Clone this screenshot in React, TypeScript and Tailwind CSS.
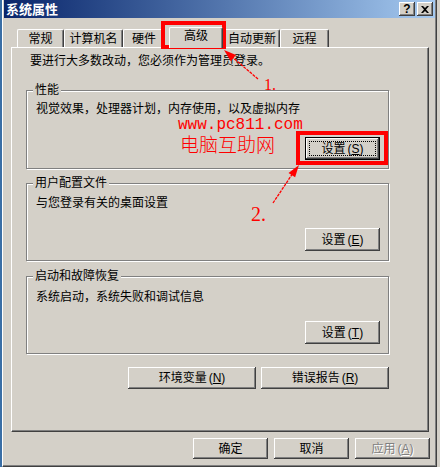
import type { ReactNode } from "react";

const bevel =
  "shadow-[inset_-1px_-1px_0_#404040,inset_1px_1px_0_#ffffff,inset_-2px_-2px_0_#808080]";
const etched = "border border-[#808080] shadow-[inset_1px_1px_0_#ffffff,1px_1px_0_#ffffff]";

function Button({
  children,
  className = "",
  primary = false,
  disabled = false,
}: {
  children: ReactNode;
  className?: string;
  primary?: boolean;
  disabled?: boolean;
}) {
  if (primary) {
    return (
      <div className={`flex border border-black bg-[#d4d0c8] p-[3px] ${bevel} ${className}`}>
        <div className="flex flex-1 items-center justify-center border border-dotted border-black">
          {children}
        </div>
      </div>
    );
  }
  return (
    <div
      className={`flex items-center justify-center bg-[#d4d0c8] ${bevel} ${
        disabled ? "text-[#808080] [text-shadow:1px_1px_0_#ffffff]" : ""
      } ${className}`}
    >
      {children}
    </div>
  );
}

function Key({ k }: { k: string }) {
  return (
    <span className="ml-[2px]">
      (<span className="underline underline-offset-1">{k}</span>)
    </span>
  );
}

function Group({
  title,
  text,
  children,
  className = "",
  textClass = "",
  btnClass = "",
}: {
  title: string;
  text: string;
  children: ReactNode;
  className?: string;
  textClass?: string;
  btnClass?: string;
}) {
  return (
    <fieldset className={`${etched} ${className}`}>
      <legend className="ml-[6px] bg-[#d4d0c8] px-[2px] leading-[14px]">{title}</legend>
      <div className={`pl-[9px] ${textClass}`}>{text}</div>
      <div className={`flex justify-end pr-[8px] ${btnClass}`}>{children}</div>
    </fieldset>
  );
}

export default function App() {
  const tabs = [
    { label: "常规", cls: "w-[47px]" },
    { label: "计算机名", cls: "w-[59px]" },
    { label: "硬件", cls: "w-[42px]" },
    { label: "高级", cls: "w-[54px] ml-[4px]", active: true },
    { label: "自动更新", cls: "w-[56px] ml-[1px]" },
    { label: "远程", cls: "w-[49px]" },
  ];

  return (
    <div className="relative flex h-[467px] w-[440px] overflow-hidden bg-[#d4d0c8] font-['Liberation_Sans','Noto_Sans_CJK_SC',sans-serif] text-[12px] leading-[14px] text-black">
      <div className="w-[2px] bg-[#3a6ea5]" />

      {/* window */}
      <div className="flex w-[435px] flex-col border-b border-l border-r border-b-[#404040] border-l-white border-r-[#404040] pl-[1px] pr-[1px] shadow-[inset_-1px_-1px_0_#808080]">
        {/* title bar */}
        <div className="flex h-[18px] items-center bg-linear-to-r from-[#0a246a] to-[#a6caf0] pl-[2px] pr-[2px]">
          <span className="text-[13px] font-bold leading-none text-white">系统属性</span>
          <div className="ml-auto flex gap-[2px]">
            <div className={`flex h-[14px] w-[16px] items-center justify-center bg-[#d4d0c8] text-[12px] font-bold leading-none ${bevel}`}>
              ?
            </div>
            <div className={`flex h-[14px] w-[16px] items-center justify-center bg-[#d4d0c8] ${bevel}`}>
              <svg width="8" height="7" viewBox="0 0 8 7">
                <path d="M0 0h2l2 2 2-2h2L5 3.5 8 7H6L4 5 2 7H0l3-3.5z" fill="#000" />
              </svg>
            </div>
          </div>
        </div>

        {/* tabs */}
        <div className="ml-[10px] mt-[9px] flex h-[20px] items-end pl-[3px]">
          {tabs.map((t) =>
            t.active ? (
              <div
                key={t.label}
                className={`relative z-10 -mb-px flex h-[21px] justify-center rounded-t-[2px] border-l border-r border-t border-l-white border-r-[#404040] border-t-white bg-[#d4d0c8] pt-[1px] shadow-[inset_-1px_0_0_#808080] ${t.cls}`}
              >
                {t.label}
              </div>
            ) : (
              <div
                key={t.label}
                className={`flex h-[18px] justify-center rounded-t-[2px] border-l border-r border-t border-l-white border-r-[#404040] border-t-white pt-[2px] shadow-[inset_-1px_0_0_#808080] ${t.cls}`}
              >
                {t.label}
              </div>
            )
          )}
        </div>

        {/* tab panel */}
        <div className="ml-[7px] flex h-[385px] w-[418px] flex-col border-b border-l border-r border-t border-b-[#404040] border-l-white border-r-[#404040] border-t-white pl-[14px] shadow-[inset_-1px_-1px_0_#808080]">
          <div className="ml-[4px] mt-[6px]">要进行大多数改动，您必须作为管理员登录。</div>

          <div className="flex w-[363px] flex-col">
            <Group
              title="性能"
              text="视觉效果，处理器计划，内存使用，以及虚拟内存"
              className="mt-[15px]"
              textClass="pt-[5px]"
              btnClass="mt-[21px] pb-[8px]"
            >
              <Button primary className="h-[23px] w-[75px]">
                设置<Key k="S" />
              </Button>
            </Group>

            <Group
              title="用户配置文件"
              text="与您登录有关的桌面设置"
              className="mt-[7px]"
              textClass="pt-[6px]"
              btnClass="mt-[18px] pb-[9px]"
            >
              <Button className="h-[23px] w-[75px]">
                设置<Key k="E" />
              </Button>
            </Group>

            <Group
              title="启动和故障恢复"
              text="系统启动，系统失败和调试信息"
              className="mt-[8px]"
              textClass="pt-[7px]"
              btnClass="mt-[17px] pb-[9px]"
            >
              <Button className="h-[23px] w-[75px]">
                设置<Key k="T" />
              </Button>
            </Group>

            <div className="mt-[13px] flex justify-end gap-[5px]">
              <Button className="h-[22px] w-[128px]">
                环境变量<Key k="N" />
              </Button>
              <Button className="h-[22px] w-[128px]">
                错误报告<Key k="R" />
              </Button>
            </div>
          </div>
        </div>

        {/* dialog buttons */}
        <div className="mr-[5px] mt-[6px] flex justify-end gap-[6px]">
          <Button className="h-[21px] w-[75px]">确定</Button>
          <Button className="h-[21px] w-[75px]">取消</Button>
          <Button disabled className="h-[21px] w-[75px]">
            应用<Key k="A" />
          </Button>
        </div>
      </div>
      <div className="flex-1 bg-[#d4d0c8]" />

      {/* annotations drawn over the screenshot */}
      <span className="absolute left-[178px] top-[118px] font-['Liberation_Mono',monospace] text-[16px] leading-[14px] text-[#ff0000]">
        www.pc811.com
      </span>
      <span className="absolute left-[180px] top-[134px] font-['Noto_Sans_CJK_SC',sans-serif] text-[19px] font-light leading-[20px] text-[#ff0000]">
        电脑互助网
      </span>
      <span className="absolute left-[264px] top-[76px] font-['Liberation_Serif',serif] text-[16px] leading-[18px] text-[#ff0000]">
        1.
      </span>
      <span className="absolute left-[251px] top-[203px] font-['Liberation_Serif',serif] text-[20px] leading-[22px] text-[#ff0000]">
        2.
      </span>
      <svg className="pointer-events-none absolute left-0 top-0" width="440" height="467" viewBox="0 0 440 467">
        <rect x="163" y="23" width="61" height="24" fill="none" stroke="#ff0000" strokeWidth="4" />
        <rect x="298" y="133" width="88" height="30" fill="none" stroke="#ff0000" strokeWidth="4" />
        <line x1="258" y1="79" x2="231" y2="56" stroke="#ff0000" strokeWidth="1.3" strokeDasharray="3 1" />
        <polygon points="224,50 236,55 230.8,61.2" fill="#ff0000" />
        <line x1="273" y1="203" x2="293" y2="173" stroke="#ff0000" strokeWidth="1.3" strokeDasharray="3 1" />
        <polygon points="299,165 295.1,177.3 288.5,172.9" fill="#ff0000" />
      </svg>
    </div>
  );
}
